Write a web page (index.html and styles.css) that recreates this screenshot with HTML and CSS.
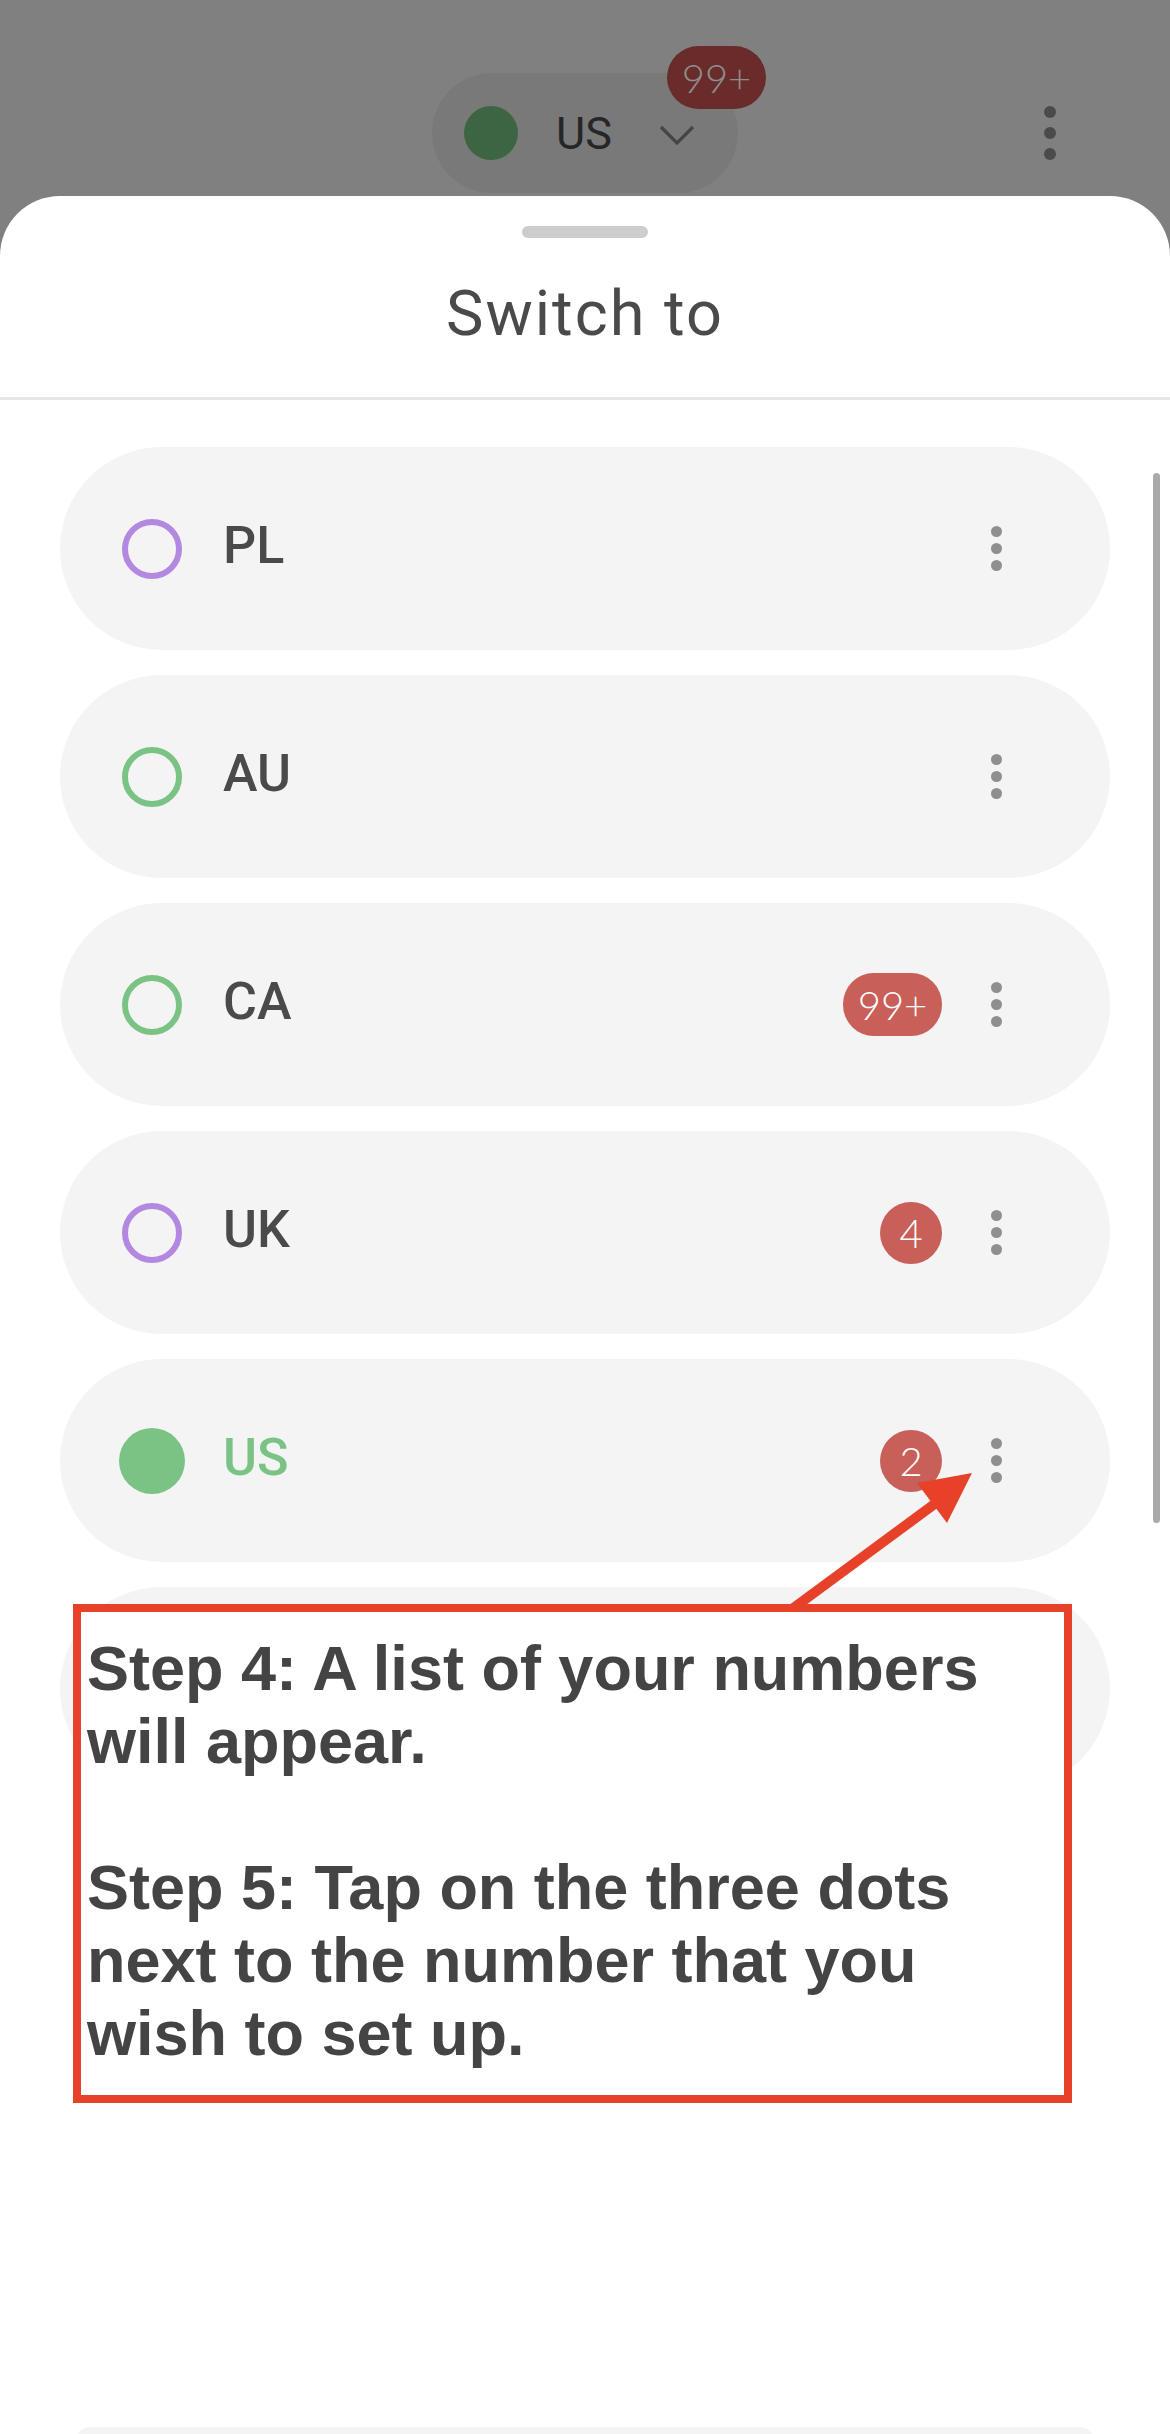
FILE: index.html
```html
<!DOCTYPE html>
<html>
<head>
<meta charset="utf-8">
<link rel="stylesheet" href="styles.css">
</head>
<body>
  <header class="topbar">
    <div class="spacer"></div>
    <div class="pill">
      <span class="pill-dot"></span>
      <span class="pill-label">US</span>
      <svg class="chev" width="36" height="20" viewBox="0 0 36 20"><polyline points="2,2 18,18 34,2" fill="none" stroke="#454545" stroke-width="3.2"/></svg>
      <span class="pill-badge">99+</span>
    </div>
    <div class="top-menu"><span></span><span></span><span></span></div>
  </header>

  <section class="sheet">
    <div class="handle"></div>
    <h1 class="title">Switch to</h1>
    <div class="list">
      <div class="row">
        <span class="ind"><span class="ring purple"></span></span>
        <span class="label">PL</span>
        <span class="menu"><i></i><i></i><i></i></span>
      </div>
      <div class="row">
        <span class="ind"><span class="ring green"></span></span>
        <span class="label">AU</span>
        <span class="menu"><i></i><i></i><i></i></span>
      </div>
      <div class="row">
        <span class="ind"><span class="ring green"></span></span>
        <span class="label">CA</span>
        <span class="badge wide">99+</span>
        <span class="menu"><i></i><i></i><i></i></span>
      </div>
      <div class="row">
        <span class="ind"><span class="ring purple"></span></span>
        <span class="label">UK</span>
        <span class="badge">4</span>
        <span class="menu"><i></i><i></i><i></i></span>
      </div>
      <div class="row">
        <span class="ind"><span class="filled"></span></span>
        <span class="label active">US</span>
        <span class="badge">2</span>
        <span class="menu"><i></i><i></i><i></i></span>
      </div>
      <div class="row"></div>
    </div>
    <div class="footer-bar"></div>
    <div class="scrollbar"></div>
  </section>

  <svg class="arrow" width="200" height="160" viewBox="0 0 200 160">
    <line x1="8" y1="152" x2="160" y2="40" stroke="#e8412a" stroke-width="10"/>
    <polygon points="192,13 137,23 167,63" fill="#e8412a"/>
  </svg>

  <div class="note">
    Step 4: A list of your numbers<br>
    will appear.<br>
    <br>
    Step 5: Tap on the three dots<br>
    next to the number that you<br>
    wish to set up.
  </div>
</body>
</html>
```

FILE: styles.css
```css
html, body {
  margin: 0;
  padding: 0;
}
body {
  position: relative;
  width: 1170px;
  height: 2434px;
  overflow: hidden;
  background: #808080;
  font-family: Roboto, "Noto Sans", sans-serif;
}

/* dimmed top bar */
.topbar {
  height: 196px;
  box-sizing: border-box;
  padding-top: 73px;
  display: grid;
  grid-template-columns: 1fr auto 1fr;
  align-items: start;
}
.pill {
  position: relative;
  height: 120px;
  width: 306px;
  box-sizing: border-box;
  border-radius: 60px;
  background: #797979;
  display: flex;
  align-items: center;
  padding-left: 32px;
}
.pill-dot {
  width: 54px;
  height: 54px;
  border-radius: 50%;
  background: #3d6443;
}
.pill-label {
  margin-left: 38px;
  font-size: 45px;
  color: #262626;
  line-height: 1;
}
.chev {
  margin-left: 47px;
  margin-top: 4px;
}
.pill-badge {
  position: absolute;
  left: 235px;
  top: -27px;
  width: 99px;
  height: 63px;
  border-radius: 32px;
  background: #692c2a;
  color: #8e8e8e;
  font-family: Lato, "Open Sans", sans-serif;
  font-weight: 300;
  font-size: 40px;
  display: flex;
  align-items: center;
  justify-content: center;
}
.top-menu {
  justify-self: end;
  margin-right: 114px;
  height: 120px;
  display: flex;
  flex-direction: column;
  justify-content: center;
  gap: 9px;
}
.top-menu span {
  width: 12px;
  height: 12px;
  border-radius: 50%;
  background: #4b4b4b;
}

/* sheet */
.sheet {
  position: relative;
  background: #fff;
  border-radius: 60px 60px 0 0;
  height: 2238px;
}
.handle {
  width: 126px;
  height: 12px;
  margin: 0 auto;
  position: relative;
  top: 30px;
  border-radius: 6px;
  background: #cdcdcd;
}
.title {
  margin: 69px 0 0;
  font-weight: 400;
  font-size: 63px;
  letter-spacing: 2px;
  line-height: 74px;
  text-align: center;
  color: #4a4a4a;
  padding-bottom: 46px;
  border-bottom: 3px solid #e6e6e6;
}
.list {
  padding: 47px 60px 0;
  display: flex;
  flex-direction: column;
  gap: 25px;
}
.row {
  height: 203px;
  border-radius: 102px;
  background: #f4f4f4;
  display: flex;
  align-items: center;
  padding-left: 59px;
  padding-right: 102px;
}
.ind {
  width: 66px;
  height: 66px;
  display: flex;
  align-items: center;
  justify-content: center;
}
.ring {
  width: 60px;
  height: 60px;
  box-sizing: border-box;
  border-radius: 50%;
  border: 6px solid;
}
.ring.purple { border-color: #b388e0; }
.ring.green { border-color: #7ac385; }
.filled {
  width: 66px;
  height: 66px;
  border-radius: 50%;
  background: #7ac385;
}
.label {
  margin-left: 38px;
  font-size: 52px;
  font-weight: 500;
  color: #4a4a4a;
  margin-top: -6px;
  flex: 1;
}
.label.active { color: #7ac385; }
.badge {
  height: 62px;
  min-width: 62px;
  box-sizing: border-box;
  border-radius: 31px;
  background: #c85f59;
  color: #fff;
  font-family: Lato, "Open Sans", sans-serif;
  font-weight: 300;
  font-size: 40px;
  display: flex;
  align-items: center;
  justify-content: center;
  margin-right: 42px;
}
.badge.wide {
  width: 99px;
  height: 63px;
}
.menu {
  width: 24px;
  display: flex;
  flex-direction: column;
  align-items: center;
  gap: 6px;
}
.menu i {
  display: block;
  width: 11px;
  height: 11px;
  border-radius: 50%;
  background: #8f8f8f;
}
.footer-bar {
  margin: 637px 76px 0;
  height: 40px;
  border-radius: 14px;
  background: #f4f4f4;
}
.scrollbar {
  position: absolute;
  left: 1153px;
  top: 277px;
  width: 7px;
  height: 1050px;
  border-radius: 4px;
  background: #a9a9a9;
}

/* annotation overlay */
.arrow {
  position: absolute;
  left: 780px;
  top: 1460px;
}
.note {
  position: absolute;
  left: 73px;
  top: 1604px;
  width: 999px;
  height: 499px;
  box-sizing: border-box;
  border: 8px solid #e8412a;
  background: #fff;
  padding: 20px 0 0 6px;
  font-family: "Liberation Sans", Arial, sans-serif;
  font-weight: 700;
  font-size: 63px;
  line-height: 73px;
  color: #444444;
}
```
